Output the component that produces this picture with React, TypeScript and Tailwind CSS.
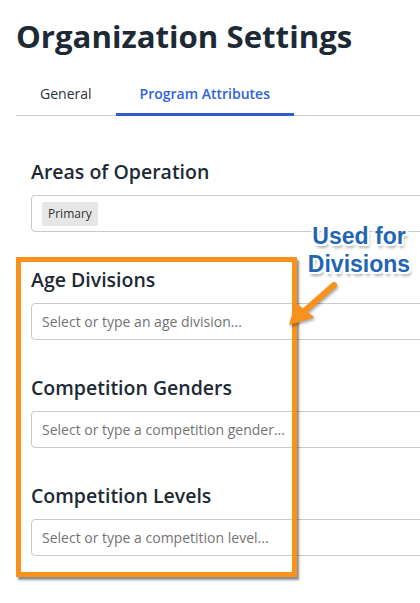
import React from "react";

const font = { fontFamily: '"Open Sans", "Liberation Sans", sans-serif' };

function Section({ title, children, mt }: { title: string; children: React.ReactNode; mt: string }) {
  return (
    <div className={mt}>
      <div className="text-[19.5px] leading-[24px] font-semibold text-[#1d2a35]">{title}</div>
      <div className="mt-[11px] h-[37px] w-[520px] rounded-[4px] border border-[#c9c9c9] bg-white pl-[10px] flex items-center">
        {children}
      </div>
    </div>
  );
}

function Placeholder({ text }: { text: string }) {
  return <span className="text-[14px] text-[#737373]">{text}</span>;
}

export default function App() {
  return (
    <div className="relative w-[420px] h-[603px] overflow-hidden bg-white" style={font}>
      <div className="pl-[16px] w-[560px]">
        <h1 className="pt-[21px] text-[31.2px] leading-none font-bold text-[#1d2a35]">
          Organization Settings
        </h1>
        <div className="mt-[32px] flex border-b border-[#c5cad3]">
          <div className="-mb-px px-6 pb-[9px] border-b-[3px] border-transparent text-[14px] leading-[20px] text-[#2a323a]">
            General
          </div>
          <div className="-mb-px px-6 pb-[9px] border-b-[3px] border-[#2d5ccc] text-[14px] leading-[20px] font-semibold text-[#2f63d8]">
            Program Attributes
          </div>
        </div>
        <div className="pl-[15px]">
          <Section title="Areas of Operation" mt="mt-[44px]">
            <span className="h-[24px] px-[6px] rounded-[2px] bg-[#e6e6e6] text-[12px] leading-[24px] text-[#333]">
              Primary
            </span>
          </Section>
          <Section title="Age Divisions" mt="mt-[36px]">
            <Placeholder text="Select or type an age division..." />
          </Section>
          <Section title="Competition Genders" mt="mt-[36px]">
            <Placeholder text="Select or type a competition gender..." />
          </Section>
          <Section title="Competition Levels" mt="mt-[36px]">
            <Placeholder text="Select or type a competition level..." />
          </Section>
        </div>
      </div>

      {/* orange highlight box */}
      <div className="absolute left-[16px] top-[257px] w-[281px] h-[320px] border-[5px] border-[#f8921d] shadow-[2px_3px_2px_rgba(0,0,0,0.45)]" />

      {/* arrow */}
      <svg className="absolute left-0 top-0" width="420" height="603" viewBox="0 0 420 603">
        <g style={{ filter: "drop-shadow(1px 2px 1.5px rgba(0,0,0,0.35))" }}>
          <line x1="334" y1="285" x2="302" y2="313" stroke="#f8921d" strokeWidth="6" strokeLinecap="round" />
          <polygon points="290,324 296,304 313,317" fill="#f8921d" stroke="#f8921d" strokeWidth="1.5" strokeLinejoin="round" />
        </g>
      </svg>

      {/* callout text */}
      <div
        className="absolute left-[301px] top-[222px] w-[116px] text-center text-[23px] leading-[28px] font-bold text-[#1f66b3] [text-shadow:-2px_0_0_#fff,2px_0_0_#fff,0_-2px_0_#fff,0_2px_0_#fff,-2px_-2px_0_#fff,2px_-2px_0_#fff,-2px_2px_0_#fff,2px_2px_0_#fff,2px_4px_3px_rgba(0,0,0,0.35)]"
        style={{ fontFamily: '"Liberation Sans", Arial, sans-serif' }}
      >
        Used for
        <br />
        Divisions
      </div>
    </div>
  );
}
